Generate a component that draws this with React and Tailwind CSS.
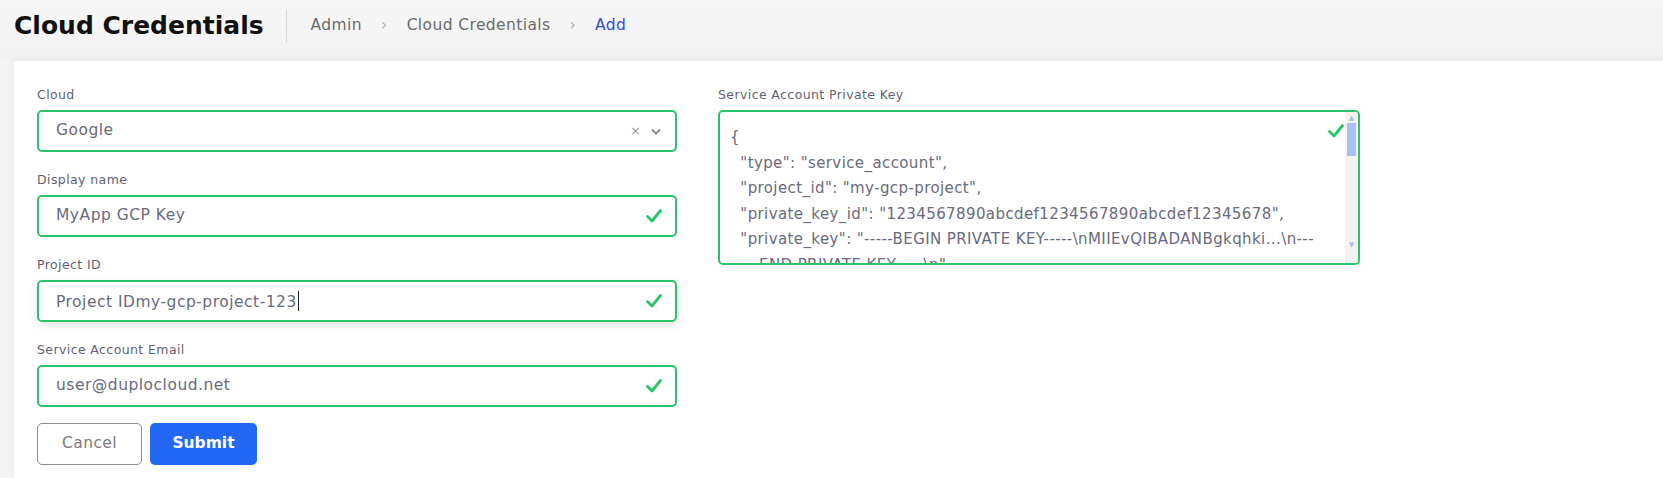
const font = { fontFamily: '"DejaVu Sans", "Open Sans", sans-serif' };

function Check() {
  return (
    <svg width="16" height="14" viewBox="0 0 16 14" fill="none" className="shrink-0">
      <path d="M1.5 7.5 L6 12 L14.5 1.5" stroke="#2bc46b" strokeWidth="2.8" strokeLinecap="round" strokeLinejoin="round" />
    </svg>
  );
}

function Label({ children }) {
  return <p className="text-[12.5px] leading-[16px] tracking-[0.4px] text-[#5f5f72]">{children}</p>;
}

function Field({ label, value, caret, shadow }) {
  return (
    <div>
      <Label>{label}</Label>
      <div
        className={`mt-[7px] flex h-[42px] items-center justify-between rounded-[5px] border-2 border-[#2bc46b] bg-white pl-[17px] pr-[13px] ${shadow ? "shadow-[0_3px_8px_rgba(0,0,0,0.12)]" : ""}`}
      >
        <span className="text-[15.5px] tracking-[0.5px] text-[#6a6a7c]">
          {value}
          {caret && <span className="ml-px inline-block h-[20px] w-px translate-y-[4px] bg-[#222]" />}
        </span>
        <Check />
      </div>
    </div>
  );
}

const keyLines = [
  "{",
  '  "type": "service_account",',
  '  "project_id": "my-gcp-project",',
  '  "private_key_id": "1234567890abcdef1234567890abcdef12345678",',
  '  "private_key": "-----BEGIN PRIVATE KEY-----\\nMIIEvQIBADANBgkqhki...\\n---',
  '-----END PRIVATE KEY-----\\n",',
];

export default function App() {
  return (
    <div style={font} className="min-h-[478px] bg-[#f5f5f5]">
      <header className="flex h-[61px] items-center bg-gradient-to-b from-[#f7f7f7] to-[#f1f1f1] pb-[9px] pl-[14px]">
        <h1 className="text-[25px] font-semibold text-[#111]">Cloud Credentials</h1>
        <div className="ml-[22px] h-[34px] w-px bg-[#d6d6d6]" />
        <nav className="ml-[24px] flex items-center text-[15.5px] tracking-[0.4px] text-[#6b6b6b]">
          <span>Admin</span>
          <span className="mx-[19px] text-[#aaa]">›</span>
          <span>Cloud Credentials</span>
          <span className="mx-[19px] text-[#aaa]">›</span>
          <span className="text-[#2a4ee0]">Add</span>
        </nav>
      </header>

      <main className="ml-[14px] min-h-[417px] rounded-tl-[4px] bg-white pl-[23px] pt-[26px] shadow-[0_0_8px_rgba(0,0,0,0.05)]">
        <div className="flex gap-[41px]">
          <div className="flex w-[640px] flex-col gap-[20px]">
            <div>
              <Label>Cloud</Label>
              <div className="mt-[7px] flex h-[42px] items-center justify-between rounded-[5px] border-2 border-[#2bc46b] bg-white pl-[17px] pr-[14px]">
                <span className="text-[15.5px] tracking-[0.5px] text-[#6a6a7c]">Google</span>
                <div className="flex items-center gap-[10px] text-[#999]">
                  <span className="text-[13px]">×</span>
                  <svg width="10" height="7" viewBox="0 0 10 7">
                    <path d="M1 1.5 L5 5.5 L9 1.5" stroke="#888" strokeWidth="1.8" fill="none" />
                  </svg>
                </div>
              </div>
            </div>
            <Field label="Display name" value="MyApp GCP Key" />
            <Field label="Project ID" value="Project IDmy-gcp-project-123" caret shadow />
            <Field label="Service Account Email" value="user@duplocloud.net" />
            <div className="-mt-[4px] flex gap-[8px]">
              <button className="h-[42px] w-[105px] rounded-[5px] border border-[#8d8d8d] text-[15.5px] tracking-[0.4px] text-[#7b7b7b]">
                Cancel
              </button>
              <button className="h-[42px] w-[107px] rounded-[5px] bg-[#2268f5] text-[15.5px] font-semibold text-white">
                Submit
              </button>
            </div>
          </div>

          <div className="w-[642px]">
            <Label>Service Account Private Key</Label>
            <div className="relative mt-[7px] flex h-[155px] overflow-hidden rounded-[5px] border-2 border-[#2bc46b] bg-white">
              <div className="flex-1 overflow-hidden whitespace-pre pl-[10px] pt-[13px] text-[15px] leading-[25.5px] tracking-[0.4px] text-[#6a6a7c]">
                {keyLines.map((l, i) => (
                  <div key={i}>{l}</div>
                ))}
              </div>
              <div className="absolute right-[14px] top-[12px]">
                <Check />
              </div>
              <div className="flex w-[13px] flex-col items-center bg-[#f4f3f0]">
                <span className="mt-[2px] text-[7px] leading-[8px] text-[#a6bff0]">▲</span>
                <div className="mt-[1px] h-[33px] w-[9px] bg-[#a9c0f2]" />
                <div className="flex-1" />
                <span className="mb-[14px] text-[7px] leading-[8px] text-[#a6bff0]">▼</span>
              </div>
            </div>
          </div>
        </div>
      </main>
    </div>
  );
}
